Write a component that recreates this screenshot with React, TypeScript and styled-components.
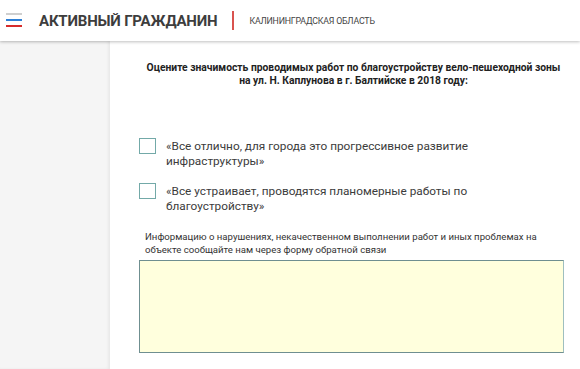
import React from "react";
import styled, { createGlobalStyle } from "styled-components";

const Global = createGlobalStyle`
  html, body { margin: 0; padding: 0; }
  body {
    font-family: Roboto, "Liberation Sans", Arial, sans-serif;
    background: #ffffff;
    width: 580px;
    height: 369px;
    overflow: hidden;
  }
`;

const Page = styled.div`
  display: flex;
  flex-direction: column;
  width: 580px;
  height: 369px;
  overflow: hidden;
`;

const Header = styled.header`
  position: relative;
  z-index: 2;
  display: flex;
  align-items: center;
  height: 41px;
  flex-shrink: 0;
  padding: 0 0 0 6px;
  background: #fff;
  box-shadow: 0 1px 3px rgba(0, 0, 0, 0.25);
`;

const Burger = styled.div`
  display: flex;
  flex-direction: column;
  gap: 4px;
  width: 16px;
  margin-top: -1px;
`;

const BurgerLine = styled.span<{ $color: string }>`
  display: block;
  height: 2px;
  background: ${(p) => p.$color};
`;

const Title = styled.div`
  margin-left: 17px;
  font-size: 15px;
  font-weight: 700;
  color: #3d3d3d;
  letter-spacing: -0.2px;
`;

const Divider = styled.span`
  width: 2px;
  height: 19px;
  background: #d9534f;
  margin: 0 15px;
`;

const Region = styled.div`
  font-size: 8.8px;
  color: #444;
  letter-spacing: -0.2px;
`;

const Body = styled.div`
  display: flex;
  flex: 1;
  min-height: 0;
`;

const Sidebar = styled.aside`
  width: 110px;
  flex-shrink: 0;
  background: #f5f5f5;
  box-shadow: inset -2px 0 3px rgba(0, 0, 0, 0.05);
`;

const Main = styled.main`
  flex: 1;
  background: #fff;
  padding: 20px 15px 0 29px;
`;

const Column = styled.div`
  width: 425px;
  display: flex;
  flex-direction: column;
`;

const Question = styled.div`
  text-align: center;
  white-space: nowrap;
  font-size: 10.3px;
  font-weight: 700;
  line-height: 13px;
  color: #222;
  margin-left: 4px;
`;

const Options = styled.div`
  display: flex;
  flex-direction: column;
  gap: 14px;
  margin-top: 51px;
`;

const Option = styled.label`
  display: flex;
  align-items: flex-start;
  gap: 10px;
`;

const Box = styled.span`
  width: 15px;
  height: 14px;
  border: 1px solid #73a9a8;
  flex-shrink: 0;
`;

const OptionText = styled.span`
  font-size: 11.8px;
  line-height: 15px;
  color: #3b3b3b;
  margin-top: 1px;
  white-space: nowrap;
`;

const Info = styled.div`
  font-size: 9.6px;
  line-height: 13px;
  color: #333;
  margin: 16px 0 0 6px;
  white-space: nowrap;
`;

const Area = styled.div`
  height: 91px;
  margin-top: 4px;
  background: #ffffdd;
  border: 1px solid #6f8f90;
  border-right-color: #9fbfbf;
`;

export default function App() {
  return (
    <Page>
      <Global />
      <Header>
        <Burger>
          <BurgerLine $color="#cfcfcf" />
          <BurgerLine $color="#2c7fd6" />
          <BurgerLine $color="#d62b2b" />
        </Burger>
        <Title>АКТИВНЫЙ ГРАЖДАНИН</Title>
        <Divider />
        <Region>КАЛИНИНГРАДСКАЯ ОБЛАСТЬ</Region>
      </Header>
      <Body>
        <Sidebar />
        <Main>
          <Column>
            <Question>
              Оцените значимость проводимых работ по благоустройству вело-пешеходной зоны
              <br />
              на ул. Н. Каплунова в г. Балтийске в 2018 году:
            </Question>
            <Options>
              <Option>
                <Box />
                <OptionText>
                  «Все отлично, для города это прогрессивное развитие
                  <br />
                  инфраструктуры»
                </OptionText>
              </Option>
              <Option>
                <Box />
                <OptionText>
                  «Все устраивает, проводятся планомерные работы по
                  <br />
                  благоустройству»
                </OptionText>
              </Option>
            </Options>
            <Info>
              Информацию о нарушениях, некачественном выполнении работ и иных проблемах на
              <br />
              объекте сообщайте нам через форму обратной связи
            </Info>
            <Area />
          </Column>
        </Main>
      </Body>
    </Page>
  );
}
